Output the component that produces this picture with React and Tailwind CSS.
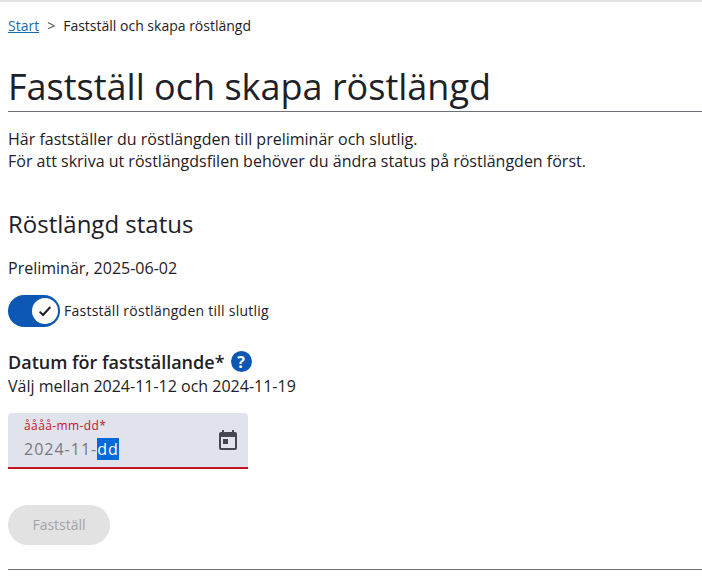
export default function App() {
  return (
    <main className="min-h-screen bg-white text-[#1e2027] font-['Open_Sans',sans-serif] border-t-2 border-[#e3e3e3] pl-2">
      {/* Breadcrumb */}
      <nav className="h-[48px] pt-[14px] flex items-start text-sm leading-[20px]">
        <a href="#" className="text-[#1a6ca8] underline">Start</a>
        <span className="mx-2 text-[#4a4d57]">&gt;</span>
        <span>Fastställ och skapa röstlängd</span>
      </nav>

      <h1 className="text-[36px] leading-[48px] mt-[13px] border-b border-[#6f7079]">Fastställ och skapa röstlängd</h1>

      <p className="mt-[16px] text-base leading-[22px]">
        Här fastställer du röstlängden till preliminär och slutlig.<br />
        För att skriva ut röstlängdsfilen behöver du ändra status på röstlängden först.
      </p>

      <h2 className="mt-[36px] text-[24px] leading-[32px]">Röstlängd status</h2>
      <p className="mt-[17px] text-base leading-[22px]">Preliminär, 2025-06-02</p>

      {/* Switch */}
      <div className="mt-[16px] flex items-center h-[32px]">
        <div className="w-[52px] h-[32px] rounded-full bg-[#0b57b3] flex items-center justify-end pr-[2px]">
          <div className="w-[26px] h-[26px] rounded-full bg-white flex items-center justify-center">
            <svg width="16" height="16" viewBox="0 0 24 24" fill="none" stroke="#1e2027" strokeWidth="3">
              <path d="M4 13l5 5L20 6" />
            </svg>
          </div>
        </div>
        <span className="ml-[4px] text-sm tracking-[0.25px]">Fastställ röstlängden till slutlig</span>
      </div>

      {/* Date */}
      <div className="mt-[21px] flex items-center h-[27px]">
        <span className="text-lg font-semibold">Datum för fastställande*</span>
        <span className="ml-[6px] w-[21px] h-[21px] rounded-full bg-[#0b57b3] text-white text-base font-bold flex items-center justify-center">?</span>
      </div>
      <p className="text-base leading-[22px]">Välj mellan 2024-11-12 och 2024-11-19</p>

      <div className="mt-[16px] w-[240px] h-[56px] bg-[#e0e2ec] rounded-t border-b-2 border-[#c4161c] flex items-center justify-between pl-4 pr-[8px]">
        <div className="self-start pt-[5px]">
          <div className="text-xs leading-[16px] tracking-[0.4px] text-[#c4161c]">åååå-mm-dd*</div>
          <div className="mt-[4px] text-base leading-[22px] tracking-[1px] text-[#777a84]">
            2024-11-<span className="bg-[#0069d9] text-white">dd</span>
          </div>
        </div>
        <svg width="24" height="24" viewBox="0 0 24 24" fill="#44474f">
          <path d="M19 4h-1V2h-2v2H8V2H6v2H5a2 2 0 0 0-2 2v14a2 2 0 0 0 2 2h14a2 2 0 0 0 2-2V6a2 2 0 0 0-2-2zm0 16H5V9h14v11zM7 11h5v5H7z" />
        </svg>
      </div>

      <button className="mt-[36px] block w-[102px] h-[40px] rounded-full bg-[#e2e2e2] text-sm text-[#a3a4a8]">Fastställ</button>

      <hr className="mt-[24px] border-[#6f7079]" />
    </main>
  )
}
